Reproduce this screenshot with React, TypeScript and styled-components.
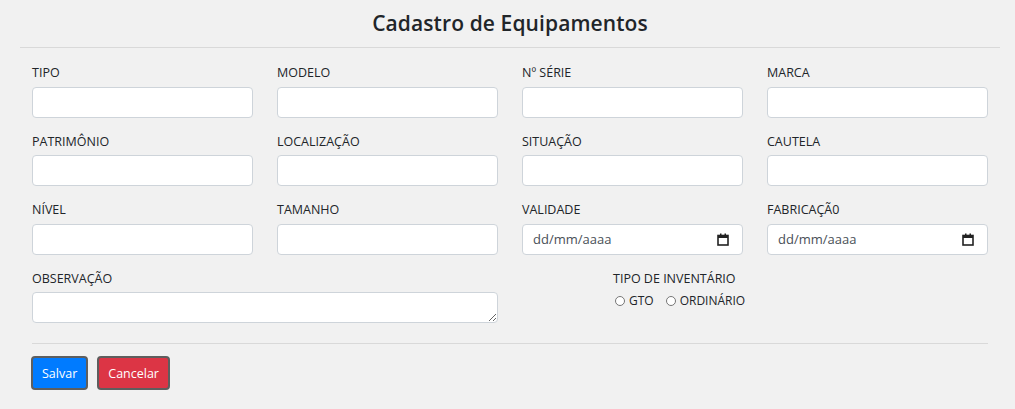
import React from "react";
import styled, { createGlobalStyle } from "styled-components";

const Global = createGlobalStyle`
  html, body { margin: 0; padding: 0; background: #f1f1f1; }
  body { font-family: "Open Sans", "Noto Sans", sans-serif; color: #212529; }
  * { box-sizing: border-box; }
`;

const Page = styled.div`
  padding: 0 15px 0 20px;
`;

const Title = styled.h1`
  margin: 0;
  height: 48px;
  padding-bottom: 1px;
  display: flex;
  align-items: center;
  justify-content: center;
  font-size: 21px;
  font-weight: 600;
  letter-spacing: 0.1px;
  color: #212529;
  border-bottom: 1px solid #d9d9d9;
`;

const Form = styled.form`
  padding: 15px 12px 0 12px;
`;

const Grid = styled.div`
  display: grid;
  grid-template-columns: repeat(4, 1fr);
  column-gap: 24px;
  row-gap: 14.1px;
`;

const Field = styled.div<{ $span?: number; $indent?: number }>`
  display: flex;
  flex-direction: column;
  grid-column: span ${(p) => p.$span ?? 1};
  padding-left: ${(p) => p.$indent ?? 0}px;
`;

const Label = styled.label`
  font-size: 12.5px;
  line-height: 19.5px;
  margin-bottom: 4px;
  color: #212529;
  text-transform: uppercase;
`;

const Input = styled.input`
  height: 31px;
  width: 100%;
  border: 1px solid #ced4da;
  border-radius: 4px;
  background: #fff;
  font-family: inherit;
  font-size: 13px;
  padding: 0 10px;
  outline: none;
`;

const TextArea = styled.textarea`
  height: 31px;
  width: 100%;
  border: 1px solid #ced4da;
  border-radius: 4px;
  background: #fff;
  font-family: inherit;
  font-size: 13px;
  padding: 4px 10px;
  outline: none;
  resize: vertical;
  display: block;
`;

const DateBox = styled.div`
  height: 31px;
  width: 100%;
  border: 1px solid #ced4da;
  border-radius: 4px;
  background: #fff;
  display: flex;
  align-items: center;
  justify-content: space-between;
  padding: 0 13px 0 10px;
  font-size: 13px;
  color: #495057;
`;

const RadioRow = styled.div`
  display: flex;
  align-items: center;
  gap: 12px;
  padding-left: 2px;
`;

const RadioOption = styled.label`
  display: flex;
  align-items: center;
  gap: 4px;
  font-size: 12px;
  color: #212529;
`;

const RadioDot = styled.span`
  width: 10px;
  height: 10px;
  border-radius: 50%;
  border: 1px solid #767676;
  background: #fff;
  display: inline-block;
`;

const Divider = styled.div`
  margin-top: 20px;
  border-top: 1px solid #d9d9d9;
`;

const Actions = styled.div`
  display: flex;
  gap: 9px;
  padding-top: 12px;
  margin-left: -1px;
`;

const Button = styled.button<{ $variant: "primary" | "danger" }>`
  height: 34px;
  padding: 0 9px;
  border: 2px solid #5e5e5e;
  border-radius: 4px;
  font-family: inherit;
  font-size: 12.5px;
  color: #fff;
  background: ${(p) => (p.$variant === "primary" ? "#007bff" : "#dc3545")};
`;

const CalendarIcon = () => (
  <svg width="12" height="13" viewBox="0 0 12 13">
    <rect x="1" y="2.5" width="10" height="9.5" fill="none" stroke="#222" strokeWidth="1.6" />
    <rect x="1" y="2" width="10" height="3" fill="#222" />
    <rect x="3" y="0.5" width="1.5" height="2.5" fill="#222" />
    <rect x="7.5" y="0.5" width="1.5" height="2.5" fill="#222" />
  </svg>
);

const DateInput = () => (
  <DateBox>
    <span>dd/mm/aaaa</span>
    <CalendarIcon />
  </DateBox>
);

const textFields = [
  "Tipo",
  "Modelo",
  "Nº Série",
  "Marca",
  "Patrimônio",
  "Localização",
  "Situação",
  "Cautela",
  "Nível",
  "Tamanho",
];

export default function App() {
  return (
    <>
      <Global />
      <Page>
        <Title>Cadastro de Equipamentos</Title>
        <Form>
          <Grid>
            {textFields.map((f) => (
              <Field key={f}>
                <Label>{f}</Label>
                <Input type="text" />
              </Field>
            ))}
            <Field>
              <Label>Validade</Label>
              <DateInput />
            </Field>
            <Field>
              <Label>Fabricaçã0</Label>
              <DateInput />
            </Field>
            <Field $span={2}>
              <Label>Observação</Label>
              <TextArea />
            </Field>
            <Field $span={2} $indent={91}>
              <Label>Tipo de Inventário</Label>
              <RadioRow>
                <RadioOption>
                  <RadioDot />
                  GTO
                </RadioOption>
                <RadioOption>
                  <RadioDot />
                  ORDINÁRIO
                </RadioOption>
              </RadioRow>
            </Field>
          </Grid>
          <Divider />
          <Actions>
            <Button type="button" $variant="primary">Salvar</Button>
            <Button type="button" $variant="danger">Cancelar</Button>
          </Actions>
        </Form>
      </Page>
    </>
  );
}
